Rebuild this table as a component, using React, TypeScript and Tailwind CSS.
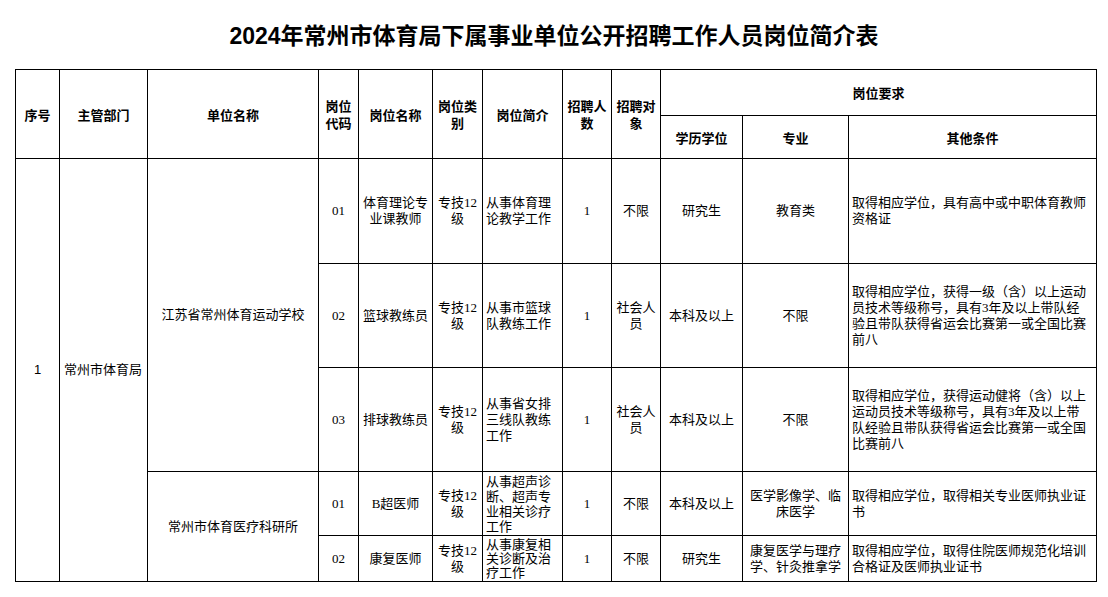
const cell = 'border border-black px-[3px] py-0 align-middle'
const head = `${cell} text-center font-bold leading-[17px]`

type Row = {
  code: string
  name: React.ReactNode
  level: React.ReactNode
  intro: React.ReactNode
  count: string
  target: React.ReactNode
  degree: string
  major: React.ReactNode
  other: React.ReactNode
  height: string
  introLeading: string
}

const rows: Row[] = [
  {
    code: '01',
    name: (
      <>
        体育理论专
        <br />
        业课教师
      </>
    ),
    level: (
      <>
        专技12
        <br />级
      </>
    ),
    intro: (
      <>
        从事体育理
        <br />
        论教学工作
      </>
    ),
    count: '1',
    target: '不限',
    degree: '研究生',
    major: '教育类',
    other: (
      <>
        取得相应学位，具有高中或中职体育教师
        <br />
        资格证
      </>
    ),
    height: 'h-[105px]',
    introLeading: 'leading-[16px]',
  },
  {
    code: '02',
    name: '篮球教练员',
    level: (
      <>
        专技12
        <br />级
      </>
    ),
    intro: (
      <>
        从事市篮球
        <br />
        队教练工作
      </>
    ),
    count: '1',
    target: (
      <>
        社会人
        <br />员
      </>
    ),
    degree: '本科及以上',
    major: '不限',
    other: (
      <>
        取得相应学位，获得一级（含）以上运动
        <br />
        员技术等级称号，具有3年及以上带队经
        <br />
        验且带队获得省运会比赛第一或全国比赛
        <br />
        前八
      </>
    ),
    height: 'h-[104px]',
    introLeading: 'leading-[16px]',
  },
  {
    code: '03',
    name: '排球教练员',
    level: (
      <>
        专技12
        <br />级
      </>
    ),
    intro: (
      <>
        从事省女排
        <br />
        三线队教练
        <br />
        工作
      </>
    ),
    count: '1',
    target: (
      <>
        社会人
        <br />员
      </>
    ),
    degree: '本科及以上',
    major: '不限',
    other: (
      <>
        取得相应学位，获得运动健将（含）以上
        <br />
        运动员技术等级称号，具有3年及以上带
        <br />
        队经验且带队获得省运会比赛第一或全国
        <br />
        比赛前八
      </>
    ),
    height: 'h-[104px]',
    introLeading: 'leading-[16px]',
  },
  {
    code: '01',
    name: 'B超医师',
    level: (
      <>
        专技12
        <br />级
      </>
    ),
    intro: (
      <>
        从事超声诊
        <br />
        断、超声专
        <br />
        业相关诊疗
        <br />
        工作
      </>
    ),
    count: '1',
    target: '不限',
    degree: '本科及以上',
    major: (
      <>
        医学影像学、临
        <br />
        床医学
      </>
    ),
    other: (
      <>
        取得相应学位，取得相关专业医师执业证
        <br />书
      </>
    ),
    height: 'h-[64px]',
    introLeading: 'leading-[15px]',
  },
  {
    code: '02',
    name: '康复医师',
    level: (
      <>
        专技12
        <br />级
      </>
    ),
    intro: (
      <>
        从事康复相
        <br />
        关诊断及治
        <br />
        疗工作
      </>
    ),
    count: '1',
    target: '不限',
    degree: '研究生',
    major: (
      <>
        康复医学与理疗
        <br />
        学、针灸推拿学
      </>
    ),
    other: (
      <>
        取得相应学位，取得住院医师规范化培训
        <br />
        合格证及医师执业证书
      </>
    ),
    height: 'h-[46px]',
    introLeading: 'leading-[14px]',
  },
]

export default function App() {
  return (
    <div className="h-[597px] w-[1108px] overflow-hidden bg-white text-black [font-family:'Liberation_Serif','Noto_Sans_CJK_SC',serif]">
      <div className="flex h-[69px] items-center justify-center pt-[3px] text-[23px] font-bold [font-family:'Liberation_Sans','Noto_Sans_CJK_SC',sans-serif]">
        2024年常州市体育局下属事业单位公开招聘工作人员岗位简介表
      </div>
      <div className="pl-[15px]">
        <table className="w-[1081px] table-fixed border-collapse text-[13px] leading-[16px]">
          <colgroup>
            <col className="w-[44px]" />
            <col className="w-[88px]" />
            <col className="w-[171px]" />
            <col className="w-[40px]" />
            <col className="w-[74px]" />
            <col className="w-[50px]" />
            <col className="w-[80px]" />
            <col className="w-[49px]" />
            <col className="w-[49px]" />
            <col className="w-[82px]" />
            <col className="w-[106px]" />
            <col className="w-[248px]" />
          </colgroup>
          <thead className="[font-family:'Noto_Sans_CJK_SC',sans-serif]">
            <tr className="h-[46px]">
              <th rowSpan={2} className={head}>
                序号
              </th>
              <th rowSpan={2} className={head}>
                主管部门
              </th>
              <th rowSpan={2} className={head}>
                单位名称
              </th>
              <th rowSpan={2} className={head}>
                岗位
                <br />
                代码
              </th>
              <th rowSpan={2} className={head}>
                岗位名称
              </th>
              <th rowSpan={2} className={head}>
                岗位类
                <br />别
              </th>
              <th rowSpan={2} className={head}>
                岗位简介
              </th>
              <th rowSpan={2} className={head}>
                招聘人
                <br />数
              </th>
              <th rowSpan={2} className={head}>
                招聘对
                <br />象
              </th>
              <th colSpan={3} className={head}>
                岗位要求
              </th>
            </tr>
            <tr className="h-[43px]">
              <th className={head}>学历学位</th>
              <th className={head}>专业</th>
              <th className={head}>其他条件</th>
            </tr>
          </thead>
          <tbody>
            {rows.map((r, i) => (
              <tr key={i} className={r.height}>
                {i === 0 && (
                  <>
                    <td rowSpan={5} className={`${cell} text-center [font-family:'Liberation_Sans',sans-serif]`}>
                      1
                    </td>
                    <td rowSpan={5} className={`${cell} pl-[4px]`}>
                      常州市体育局
                    </td>
                    <td rowSpan={3} className={`${cell} text-center`}>
                      江苏省常州体育运动学校
                    </td>
                  </>
                )}
                {i === 3 && (
                  <td rowSpan={2} className={`${cell} text-center`}>
                    常州市体育医疗科研所
                  </td>
                )}
                <td className={`${cell} text-center`}>{r.code}</td>
                <td className={`${cell} text-center`}>{r.name}</td>
                <td className={`${cell} text-center`}>{r.level}</td>
                <td className={`${cell} ${r.introLeading} px-[2px] text-left`}>{r.intro}</td>
                <td className={`${cell} text-center`}>{r.count}</td>
                <td className={`${cell} text-center`}>{r.target}</td>
                <td className={`${cell} text-center`}>{r.degree}</td>
                <td className={`${cell} text-center`}>{r.major}</td>
                <td className={`${cell} text-left`}>{r.other}</td>
              </tr>
            ))}
          </tbody>
        </table>
      </div>
    </div>
  )
}
